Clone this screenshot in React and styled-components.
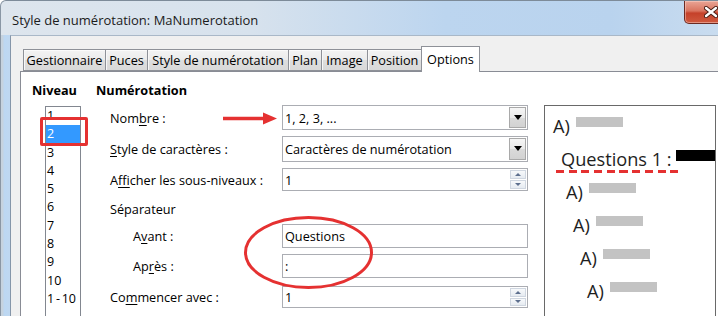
import React from "react";
import styled, { createGlobalStyle } from "styled-components";

const Global = createGlobalStyle`
  html, body { margin: 0; padding: 0; overflow: hidden; background: #fff; }
  body { font-family: "Open Sans", "Noto Sans", sans-serif; }
  * { box-sizing: border-box; }
`;

const RED = "#e53131";

const Window = styled.div`
  width: 718px;
  height: 316px;
  overflow: hidden;
  display: flex;
  flex-direction: column;
  border-top: 1px solid #7d8b99;
  border-left: 1px solid #8a97a5;
  border-top-left-radius: 6px;
  background: linear-gradient(90deg, #dde5ed 0%, #d7e2ed 35%, #bcd5ef 62%, #b9d3ee 85%, #c9dcef 100%);
`;

const TitleBar = styled.div`
  height: 34px;
  display: flex;
  align-items: flex-start;
  flex: none;
`;

const Title = styled.div`
  padding: 4px 0 0 11px;
  line-height: 30px;
  font-size: 13px;
  color: #1b1b1b;
  white-space: nowrap;
`;

const CloseButton = styled.div`
  margin-left: auto;
  margin-right: -20px;
  width: 54px;
  height: 23px;
  border: 1px solid #6b2a22;
  border-top: none;
  border-radius: 0 0 5px 5px;
  background: linear-gradient(180deg, #e9a596 0%, #d9745f 45%, #c5412a 55%, #cf5a3f 100%);
  box-shadow: inset 0 0 0 1px rgba(255, 220, 210, 0.45);
  display: flex;
  align-items: center;
  justify-content: center;
`;

const Body = styled.div`
  flex: 1;
  display: flex;
  min-height: 0;
`;

const LeftFrame = styled.div`
  width: 9px;
  flex: none;
  background: linear-gradient(90deg, #c6d3df 0px, #c6d3df 2px, #bcd7f2 3px, #bfd8f1 100%);
`;

const Client = styled.div`
  flex: 1;
  min-width: 0;
  display: flex;
  flex-direction: column;
  background: #f0f0f0;
  border-left: 1px solid #8596a9;
  border-top: 1px solid #a9b8c8;
  padding: 10px 0 0 9px;
`;

const TabStrip = styled.div`
  display: flex;
  align-items: flex-end;
  height: 25px;
  padding-left: 3px;
  flex: none;
`;

const Tab = styled.div`
  position: relative;
  width: ${(p) => p.$w}px;
  margin-left: ${(p) => (p.$first ? 0 : -1)}px;
  height: ${(p) => (p.$active ? 26 : 22)}px;
  margin-bottom: ${(p) => (p.$active ? -1 : 0)}px;
  z-index: ${(p) => (p.$active ? 2 : 1)};
  border: 1px solid #8e9198;
  border-bottom: ${(p) => (p.$active ? "none" : "1px solid #8e9198")};
  background: ${(p) =>
    p.$active
      ? "#ffffff"
      : "linear-gradient(180deg, #f3f3f3 0%, #ebebeb 50%, #dedede 51%, #d9d9d9 100%)"};
  box-shadow: ${(p) => (p.$active ? "none" : "inset 0 1px 0 #fbfbfb, inset 1px 0 0 #f7f7f7")};
  font-size: 12.7px;
  line-height: ${(p) => (p.$active ? 24 : 20)}px;
  text-align: center;
  white-space: nowrap;
  color: #000;
`;

const Panel = styled.div`
  position: relative;
  flex: 1;
  min-height: 0;
  display: flex;
  align-items: flex-start;
  background: #fff;
  border-top: 1px solid #898c95;
  border-left: 1px solid #898c95;
  padding: 9px 0 0 11px;
`;

const Header = styled.div`
  font-weight: 700;
  font-size: 12.7px;
  line-height: 18px;
  height: 18px;
  color: #000;
  white-space: nowrap;
`;

const LevelColumn = styled.div`
  width: 64px;
  flex: none;
`;

const ListBox = styled.div`
  margin: 7px 0 0 13px;
  width: 36px;
  height: 230px;
  border: 1px solid #828790;
  background: #fff;
  overflow: hidden;
`;

const ListItem = styled.div`
  height: 18.3px;
  line-height: 18.3px;
  padding-left: 1px;
  font-size: 12.5px;
  word-spacing: -1.5px;
  white-space: nowrap;
  background: ${(p) => (p.$sel ? "#3399ff" : "transparent")};
  color: ${(p) => (p.$sel ? "#fff" : "#000")};
`;

const NumberingColumn = styled.div`
  width: 432px;
  flex: none;
`;

const FormGrid = styled.div`
  margin: 3px 0 0 14px;
  display: grid;
  grid-template-columns: 172px 246px;
  grid-template-rows: 31px 31px 31px 27px 28px 32px 30px;
  align-items: center;
`;

const Label = styled.div`
  grid-column: ${(p) => (p.$wide ? "1 / span 2" : "1")};
  padding-left: ${(p) => p.$indent || 0}px;
  font-size: 12.7px;
  color: #000;
  white-space: nowrap;
  u { text-decoration: underline; text-underline-offset: 2px; }
`;

const Field = styled.div`
  grid-column: 2;
  height: ${(p) => p.$h}px;
  display: flex;
  align-items: stretch;
  border: 1px solid #abadb3;
  background: #fff;
`;

const FieldText = styled.div`
  flex: 1;
  padding-left: 2px;
  font-size: 12.7px;
  display: flex;
  align-items: center;
  white-space: nowrap;
  color: #000;
`;

const DropButton = styled.div`
  width: 17px;
  margin: 1px;
  border: 1px solid #a9a9a9;
  background: linear-gradient(180deg, #f6f6f6 0%, #e9e9e9 50%, #dadada 51%, #d2d2d2 100%);
  display: flex;
  align-items: center;
  justify-content: center;
`;

const Triangle = styled.div`
  width: 0;
  height: 0;
  border-left: 4px solid transparent;
  border-right: 4px solid transparent;
  border-top: 5px solid #000;
`;

const SpinBox = styled.div`
  width: 16px;
  margin: 1px;
  display: flex;
  flex-direction: column;
  gap: 1px;
`;

const SpinHalf = styled.div`
  flex: 1;
  border: 1px solid #cfd6e0;
  background: linear-gradient(180deg, #f7f9fb, #e6ebf1);
  display: flex;
  align-items: center;
  justify-content: center;
`;

const SpinArrow = styled.div`
  width: 0;
  height: 0;
  border-left: 3px solid transparent;
  border-right: 3px solid transparent;
  ${(p) => (p.$up ? "border-bottom: 3px solid #5d6f8e;" : "border-top: 3px solid #5d6f8e;")}
`;

const Preview = styled.div`
  position: relative;
  margin: 24px 0 0 16px;
  width: 172px;
  height: 240px;
  flex: none;
  border: 1px solid #696969;
  background: #fff;
  overflow: hidden;
  padding-top: 3px;
`;

const PreviewRow = styled.div`
  height: 33px;
  display: flex;
  align-items: center;
  padding-left: ${(p) => p.$indent}px;
  font-size: 18.2px;
  color: #1e1e1e;
  white-space: nowrap;
`;

const Mark = styled.span`
  width: 23px;
  flex: none;
`;

const GrayBar = styled.div`
  width: 47px;
  height: 10px;
  flex: none;
  margin-bottom: 7px;
  background: #c3c3c3;
`;

const BlackBar = styled.div`
  width: 60px;
  height: 11px;
  flex: none;
  margin: 0 0 6px 4px;
  background: #000;
`;

const DashedLine = styled.div`
  position: absolute;
  left: 11px;
  top: 63.5px;
  width: 127px;
  height: 3px;
  background: repeating-linear-gradient(90deg, ${RED} 0 8px, transparent 8px 12.7px);
`;

const HighlightBox = styled.div`
  position: absolute;
  left: 19px;
  top: 45px;
  width: 48px;
  height: 29px;
  border: 3px solid ${RED};
  border-radius: 2px;
`;

const Overlay = styled.svg`
  position: absolute;
  left: ${(p) => p.$x}px;
  top: ${(p) => p.$y}px;
  overflow: visible;
`;

const Dropdown = ({ h, children }) => (
  <Field $h={h}>
    <FieldText>{children}</FieldText>
    <DropButton>
      <Triangle />
    </DropButton>
  </Field>
);

const Spin = ({ h, children }) => (
  <Field $h={h}>
    <FieldText>{children}</FieldText>
    <SpinBox>
      <SpinHalf>
        <SpinArrow $up />
      </SpinHalf>
      <SpinHalf>
        <SpinArrow />
      </SpinHalf>
    </SpinBox>
  </Field>
);

const TextBox = ({ h, children }) => (
  <Field $h={h}>
    <FieldText>{children}</FieldText>
  </Field>
);

const tabs = [
  ["Gestionnaire", 83],
  ["Puces", 43],
  ["Style de numérotation", 142],
  ["Plan", 34],
  ["Image", 47],
  ["Position", 55],
  ["Options", 59, true],
];

const levels = ["1", "2", "3", "4", "5", "6", "7", "8", "9", "10", "1 - 10"];

export default function App() {
  return (
    <>
      <Global />
      <Window>
        <TitleBar>
          <Title>Style de numérotation: MaNumerotation</Title>
          <CloseButton>
            <svg width="14" height="12" viewBox="0 0 14 12">
              <path d="M2 2 L12 10 M12 2 L2 10" stroke="#4a1f17" strokeWidth="4.2" strokeLinecap="round" />
              <path d="M2 2 L12 10 M12 2 L2 10" stroke="#ffffff" strokeWidth="2.3" strokeLinecap="round" />
            </svg>
          </CloseButton>
        </TitleBar>
        <Body>
          <LeftFrame />
          <Client>
            <TabStrip>
              {tabs.map(([t, w, a], i) => (
                <Tab key={t} $w={w} $active={a} $first={i === 0}>
                  {t}
                </Tab>
              ))}
            </TabStrip>
            <Panel>
              <LevelColumn>
                <Header>Niveau</Header>
                <ListBox>
                  {levels.map((l) => (
                    <ListItem key={l} $sel={l === "2"}>
                      {l}
                    </ListItem>
                  ))}
                </ListBox>
              </LevelColumn>
              <NumberingColumn>
                <Header>Numérotation</Header>
                <FormGrid>
                  <Label>
                    Nom<u>b</u>re :
                  </Label>
                  <Dropdown h={25}>1, 2, 3, ...</Dropdown>
                  <Label>
                    <u>S</u>tyle de caractères :
                  </Label>
                  <Dropdown h={26}>Caractères de numérotation</Dropdown>
                  <Label>
                    A<u>f</u>ficher les sous-niveaux :
                  </Label>
                  <Spin h={23}>1</Spin>
                  <Label $wide>Séparateur</Label>
                  <Label $indent={23}>
                    A<u>v</u>ant :
                  </Label>
                  <TextBox h={24}>Questions</TextBox>
                  <Label $indent={23}>
                    Ap<u>r</u>ès :
                  </Label>
                  <TextBox h={24}>:</TextBox>
                  <Label>
                    Co<u>m</u>mencer avec :
                  </Label>
                  <Spin h={22}>1</Spin>
                </FormGrid>
              </NumberingColumn>
              <Preview>
                <PreviewRow $indent={8}>
                  <Mark>A)</Mark>
                  <GrayBar />
                </PreviewRow>
                <PreviewRow $indent={16}>
                  Questions 1 :<BlackBar />
                </PreviewRow>
                <PreviewRow $indent={21}>
                  <Mark>A)</Mark>
                  <GrayBar />
                </PreviewRow>
                <PreviewRow $indent={28}>
                  <Mark>A)</Mark>
                  <GrayBar />
                </PreviewRow>
                <PreviewRow $indent={35}>
                  <Mark>A)</Mark>
                  <GrayBar />
                </PreviewRow>
                <PreviewRow $indent={42}>
                  <Mark>A)</Mark>
                  <GrayBar />
                </PreviewRow>
                <DashedLine />
              </Preview>
              <HighlightBox />
              <Overlay $x={202} $y={40} width="54" height="13" viewBox="0 0 54 13">
                <line x1="0" y1="6.5" x2="42" y2="6.5" stroke={RED} strokeWidth="3.5" />
                <polygon points="40,0.5 54,6.5 40,12.5" fill={RED} />
              </Overlay>
              <Overlay $x={222} $y={143} width="131" height="75" viewBox="0 0 131 75">
                <ellipse cx="65.5" cy="37.5" rx="63" ry="35" fill="none" stroke={RED} strokeWidth="3" />
              </Overlay>
            </Panel>
          </Client>
        </Body>
      </Window>
    </>
  );
}
